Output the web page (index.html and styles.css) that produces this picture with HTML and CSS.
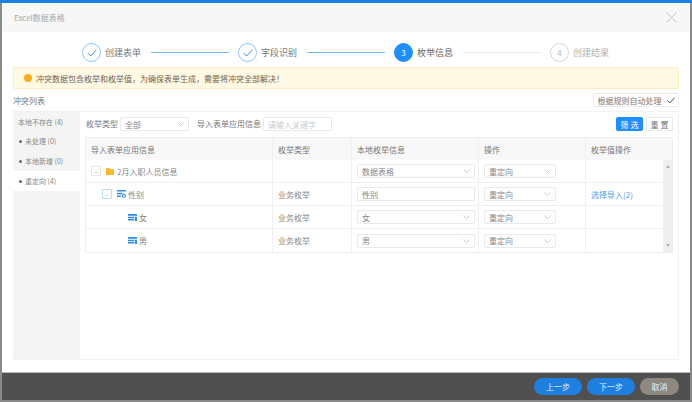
FILE: index.html
```html
<!DOCTYPE html>
<html>
<head>
    <meta charset="utf-8">
    <link rel="stylesheet" href="styles.css">
</head>
<body>
    <div class="dialog">
        <div class="dialog-title">
            <span>Excel数据表格</span>
            <svg class="close" width="11" height="11" viewBox="0 0 11 11"><path d="M.5.5l10 10M10.5.5l-10 10" stroke="#c4c4c4" stroke-width="1" fill="none"/></svg>
        </div>
        <div class="dialog-body">
            <div class="steps">
                <div class="step done">
                    <span class="step-icon"><svg width="10" height="8" viewBox="0 0 10 8"><path d="M.7 4l3 3L9.3.8" stroke="#2a8ff5" stroke-width="1" fill="none"/></svg></span>
                    <span class="step-text">创建表单</span>
                </div>
                <div class="step-line active"></div>
                <div class="step done">
                    <span class="step-icon"><svg width="10" height="8" viewBox="0 0 10 8"><path d="M.7 4l3 3L9.3.8" stroke="#2a8ff5" stroke-width="1" fill="none"/></svg></span>
                    <span class="step-text">字段识别</span>
                </div>
                <div class="step-line active"></div>
                <div class="step current">
                    <span class="step-icon">3</span>
                    <span class="step-text">枚举信息</span>
                </div>
                <div class="step-line"></div>
                <div class="step todo">
                    <span class="step-icon">4</span>
                    <span class="step-text">创建结果</span>
                </div>
            </div>

            <div class="alert"><i class="alert-dot"></i>冲突数据包含枚举和枚举值，为确保表单生成，需要将冲突全部解决！</div>

            <div class="list-head">
                <span>冲突列表</span>
                <button class="auto-btn">根据规则自动处理
                    <svg width="8" height="7" viewBox="0 0 8 7"><path d="M.5 3.5l2.3 2.5L7.5.7" stroke="#555" stroke-width="1" fill="none"/></svg>
                </button>
            </div>

            <div class="panel">
                <ul class="side">
                    <li class="plain">本地不存在 (4)</li>
                    <li>未处理 (0)</li>
                    <li>本地新增 (0)</li>
                    <li class="on">重定向 (4)</li>
                </ul>
                <div class="main">
                    <div class="filter">
                        <label>枚举类型</label>
                        <div class="select filter-type">全部<svg class="arrow" width="7" height="4" viewBox="0 0 7 4"><path d="M.5.5l3 3 3-3" stroke="#c8ccd2" fill="none"/></svg></div>
                        <label class="second">导入表单应用信息</label>
                        <div class="search">请输入关键字</div>
                        <button class="btn-filter">筛 选</button>
                        <button class="btn-reset">重 置</button>
                    </div>

                    <div class="table">
                        <div class="row head">
                            <div class="cell c1">导入表单应用信息</div>
                            <div class="cell c2">枚举类型</div>
                            <div class="cell c3">本地枚举信息</div>
                            <div class="cell c4">操作</div>
                            <div class="cell c5">枚举值操作</div>
                        </div>
                        <div class="table-rows">
                            <div class="rows">
                                <div class="row">
                                    <div class="cell c1 level0">
                                        <span class="toggle">-</span>
                                        <svg class="ico folder" width="8" height="7" viewBox="0 0 8 7"><path d="M0 0h3.2l.9 1.2H8V7H0z" fill="#fbb82b"/></svg>
                                        2月入职人员信息
                                    </div>
                                    <div class="cell c2"></div>
                                    <div class="cell c3"><div class="select wide">数据表格<svg class="arrow" width="7" height="4" viewBox="0 0 7 4"><path d="M.5.5l3 3 3-3" stroke="#c8ccd2" fill="none"/></svg></div></div>
                                    <div class="cell c4"><div class="select op">重定向<svg class="arrow" width="7" height="4" viewBox="0 0 7 4"><path d="M.5.5l3 3 3-3" stroke="#c8ccd2" fill="none"/></svg></div></div>
                                    <div class="cell c5"></div>
                                </div>
                                <div class="row">
                                    <div class="cell c1 level1">
                                        <span class="toggle blue">-</span>
                                        <svg class="ico" width="9" height="8" viewBox="0 0 9 8"><path d="M0 0h9v1.6H0zM0 2.8h5.4v1.5H0zM0 5.4h3.8v1.5H0z" fill="#2d8cf0"/><circle cx="6.9" cy="5.8" r="1.5" fill="none" stroke="#2d8cf0" stroke-width="1.1"/></svg>
                                        性别
                                    </div>
                                    <div class="cell c2">业务枚举</div>
                                    <div class="cell c3"><div class="select wide">性别</div></div>
                                    <div class="cell c4"><div class="select op">重定向<svg class="arrow" width="7" height="4" viewBox="0 0 7 4"><path d="M.5.5l3 3 3-3" stroke="#c8ccd2" fill="none"/></svg></div></div>
                                    <div class="cell c5"><a class="link">选择导入(2)</a></div>
                                </div>
                                <div class="row">
                                    <div class="cell c1 level2">
                                        <svg class="ico" width="9" height="7" viewBox="0 0 9 7"><path d="M0 0h9v1.8H0zM0 2.7h6.4v1.5H0zM0 5.1h6.4v1.5H0zM7 2.7h2v4.3H7z" fill="#2d8cf0"/></svg>
                                        女
                                    </div>
                                    <div class="cell c2">业务枚举</div>
                                    <div class="cell c3"><div class="select wide">女<svg class="arrow" width="7" height="4" viewBox="0 0 7 4"><path d="M.5.5l3 3 3-3" stroke="#c8ccd2" fill="none"/></svg></div></div>
                                    <div class="cell c4"><div class="select op">重定向<svg class="arrow" width="7" height="4" viewBox="0 0 7 4"><path d="M.5.5l3 3 3-3" stroke="#c8ccd2" fill="none"/></svg></div></div>
                                    <div class="cell c5"></div>
                                </div>
                                <div class="row">
                                    <div class="cell c1 level2">
                                        <svg class="ico" width="9" height="7" viewBox="0 0 9 7"><path d="M0 0h9v1.8H0zM0 2.7h6.4v1.5H0zM0 5.1h6.4v1.5H0zM7 2.7h2v4.3H7z" fill="#2d8cf0"/></svg>
                                        男
                                    </div>
                                    <div class="cell c2">业务枚举</div>
                                    <div class="cell c3"><div class="select wide">男<svg class="arrow" width="7" height="4" viewBox="0 0 7 4"><path d="M.5.5l3 3 3-3" stroke="#c8ccd2" fill="none"/></svg></div></div>
                                    <div class="cell c4"><div class="select op">重定向<svg class="arrow" width="7" height="4" viewBox="0 0 7 4"><path d="M.5.5l3 3 3-3" stroke="#c8ccd2" fill="none"/></svg></div></div>
                                    <div class="cell c5"></div>
                                </div>
                            </div>
                            <div class="scrollbar">
                                <svg width="4" height="3" viewBox="0 0 4 3"><path d="M0 3l2-3 2 3z" fill="#b0b0b0"/></svg>
                                <svg width="4" height="3" viewBox="0 0 4 3"><path d="M0 0l2 3 2-3z" fill="#b0b0b0"/></svg>
                            </div>
                        </div>
                    </div>
                </div>
            </div>
        </div>
        <div class="dialog-foot">
            <button class="foot-btn primary">上一步</button>
            <button class="foot-btn primary">下一步</button>
            <button class="foot-btn cancel">取消</button>
        </div>
    </div>
</body>
</html>
```

FILE: styles.css
```css
* {
    box-sizing: border-box;
}
html, body {
    margin: 0;
    height: 100%;
}
body {
    width: 692px;
    height: 402px;
    overflow: hidden;
    background: #8a8a8a;
    border-top: 3px solid #1f7fe0;
    font-family: "Noto Sans CJK SC", "Liberation Sans", sans-serif;
    font-size: 8px;
    color: #606266;
}
button {
    font-family: inherit;
    padding: 0;
    cursor: pointer;
}
.dialog {
    margin: 0 2px;
    height: 397px;
    display: flex;
    flex-direction: column;
    background: white;
}
.dialog-title {
    height: 29px;
    flex: none;
    display: flex;
    align-items: center;
    justify-content: space-between;
    padding: 0 13px 0 12px;
    background: #f7f7f7;
    color: #a9a9a9;
    font-size: 8px;
}
.dialog-body {
    flex: 1;
    min-height: 0;
    padding: 0 11px;
    display: flex;
    flex-direction: column;
}
.steps {
    height: 35px;
    flex: none;
    display: flex;
    align-items: center;
    padding-left: 69px;
    padding-top: 6px;
}
.step {
    display: flex;
    align-items: center;
    gap: 4px;
}
.step-icon {
    width: 19px;
    height: 19px;
    border-radius: 50%;
    border: 1px solid #8fc5fb;
    display: flex;
    align-items: center;
    justify-content: center;
}
.step-text {
    font-size: 9px;
    color: #777;
    width: 37px;
}
.step-line {
    width: 78px;
    height: 1px;
    margin: 0 9px;
    background: #e6e8ec;
}
.step-line.active {
    background: #79bbfb;
}
.step.current .step-icon {
    background: #1e8fff;
    border-color: #1e8fff;
    color: white;
    font-size: 8px;
}
.step.current .step-text {
    color: #666;
}
.step.todo .step-icon {
    border-color: #d4d4d4;
    color: #b5b5b5;
}
.step.todo .step-text {
    color: #b0b0b0;
}
.alert {
    height: 22px;
    flex: none;
    display: flex;
    align-items: center;
    padding-left: 10px;
    background: #fff8e3;
    border: 1px solid #fbedc4;
    border-radius: 2px;
    color: #6b6658;
    font-size: 8px;
}
.alert-dot {
    width: 8px;
    height: 8px;
    margin-right: 4px;
    border-radius: 50%;
    background: #f9ab1c;
}
.list-head {
    height: 22px;
    flex: none;
    display: flex;
    align-items: center;
    justify-content: space-between;
    font-size: 8px;
    color: #777;
}
.auto-btn {
    height: 14px;
    width: 86px;
    display: flex;
    align-items: center;
    justify-content: center;
    gap: 5px;
    background: white;
    border: 1px solid #e8eaee;
    border-radius: 2px;
    font-size: 8px;
    color: #777;
}
.panel {
    height: 249px;
    flex: none;
    display: flex;
    border: 1px solid #f2f2f2;
    border-left: none;
}
.side {
    width: 67px;
    flex: none;
    margin: 0;
    padding: 0;
    list-style: none;
    background: #f4f4f4;
    font-size: 7px;
    color: #888;
}
.side li {
    height: 20px;
    display: flex;
    align-items: center;
    padding-left: 6px;
}
.side li::before {
    content: "";
    width: 3px;
    height: 3px;
    margin-right: 3px;
    border-radius: 50%;
    background: #666;
}
.side li.plain {
    height: 19px;
    align-items: flex-start;
    padding: 5px 0 0 5px;
}
.side li.plain::before {
    display: none;
}
.side li.on {
    background: white;
}
.main {
    flex: 1;
    padding: 5px 5px 0;
    min-width: 0;
}
.filter {
    height: 20px;
    display: flex;
    align-items: flex-start;
    padding-left: 1px;
    font-size: 8px;
    color: #777;
}
.filter label {
    line-height: 14px;
    margin-right: 2px;
}
.filter label.second {
    margin-left: 8px;
}
.select {
    position: relative;
    height: 14px;
    display: flex;
    align-items: center;
    padding-left: 4px;
    background: white;
    border: 1px solid #e8eaee;
    border-radius: 2px;
    font-size: 8px;
    color: #888;
}
.arrow {
    position: absolute;
    right: 4px;
    top: 4px;
}
.filter-type {
    width: 69px;
}
.search {
    width: 69px;
    height: 14px;
    display: flex;
    align-items: center;
    padding-left: 4px;
    border: 1px solid #e8eaee;
    border-radius: 2px;
    color: #c8ccd2;
    font-size: 8px;
}
.btn-filter, .btn-reset {
    width: 27px;
    height: 14px;
    border-radius: 2px;
    font-size: 8px;
}
.btn-filter {
    margin-left: auto;
    background: #1e8fff;
    border: none;
    color: white;
}
.btn-reset {
    margin-left: 3px;
    background: white;
    border: 1px solid #e8eaee;
    color: #777;
}
.table {
    width: 588px;
    border: 1px solid #eeeeee;
    border-radius: 2px;
}
.table-rows {
    display: flex;
}
.rows {
    width: 577px;
}
.scrollbar {
    flex: 1;
    background: #efefef;
    display: flex;
    flex-direction: column;
    align-items: center;
    justify-content: space-between;
    padding: 5px 0;
}
.row {
    height: 23px;
    display: flex;
    border-bottom: 1px solid #f0f0f0;
}
.rows .row:last-child {
    border-bottom: none;
}
.row.head {
    height: 22px;
    background: #f8f8f8;
    border-bottom: none;
}
.cell {
    display: flex;
    align-items: center;
    padding-left: 5px;
    border-right: 1px solid #f0f0f0;
    font-size: 8px;
    color: #888;
}
.row.head .cell {
    color: #777;
}
.c1 {
    width: 187px;
}
.c2 {
    width: 79px;
}
.c3 {
    width: 127px;
}
.c4 {
    width: 107px;
}
.c5 {
    flex: 1;
    border-right: none;
}
.level0 {
    padding-left: 5px;
}
.level1 {
    padding-left: 16px;
}
.level2 {
    padding-left: 42px;
}
.toggle {
    width: 10px;
    height: 10px;
    display: flex;
    align-items: center;
    justify-content: center;
    margin-right: 5px;
    border: 1px solid #e8e8e8;
    border-radius: 1px;
    font-size: 7px;
    color: #888;
}
.toggle.blue {
    border-color: #b5d8fb;
}
.ico {
    margin-right: 2px;
    flex: none;
}
.ico.folder {
    margin-right: 3px;
}
.wide {
    width: 118px;
}
.op {
    width: 72px;
}
.link {
    color: #4a9ef5;
}
.dialog-foot {
    height: 28px;
    flex: none;
    display: flex;
    align-items: center;
    justify-content: flex-end;
    gap: 5px;
    padding-right: 11px;
    background: #505050;
    border-top: 1px solid #bdbdbd;
}
.foot-btn {
    height: 17px;
    border: none;
    border-radius: 9px;
    font-size: 8px;
    color: #e8f2fd;
}
.primary {
    width: 48px;
    background: #1f7fe0;
}
.cancel {
    width: 39px;
    background: #8d8880;
}
```
